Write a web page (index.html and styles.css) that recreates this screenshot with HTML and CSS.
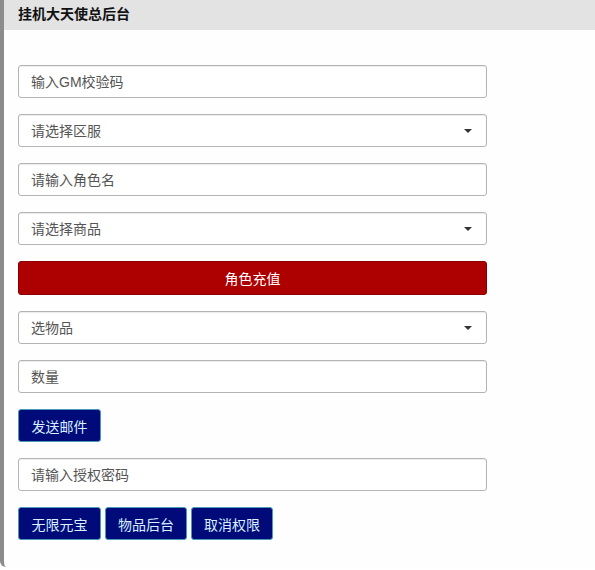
FILE: index.html
```html
<!DOCTYPE html>
<html lang="zh-CN">
<head>
  <meta charset="UTF-8" />
  <meta name="viewport" content="width=device-width, initial-scale=1.0" />
  <title>挂机大天使总后台</title>
  <link rel="stylesheet" href="styles.css">
</head>
<body>
  <div class="panel">
    <header class="panel-header">挂机大天使总后台</header>
    <form class="panel-form" onsubmit="return false">
      <input class="field" type="text" placeholder="输入GM校验码">
      <div class="select-wrap">
        <select class="field">
          <option>请选择区服</option>
        </select>
        <span class="caret"></span>
      </div>
      <input class="field" type="text" placeholder="请输入角色名">
      <div class="select-wrap">
        <select class="field">
          <option>请选择商品</option>
        </select>
        <span class="caret"></span>
      </div>
      <button class="btn btn-danger btn-block" type="button">角色充值</button>
      <div class="select-wrap">
        <select class="field">
          <option>选物品</option>
        </select>
        <span class="caret"></span>
      </div>
      <input class="field" type="text" placeholder="数量">
      <div class="btn-row">
        <button class="btn btn-navy" type="button">发送邮件</button>
      </div>
      <input class="field" type="password" placeholder="请输入授权密码">
      <div class="btn-row">
        <button class="btn btn-navy" type="button">无限元宝</button>
        <button class="btn btn-navy" type="button">物品后台</button>
        <button class="btn btn-navy" type="button">取消权限</button>
      </div>
    </form>
  </div>
</body>
</html>
```

FILE: styles.css
```css
:root {
  --font-main: "Liberation Sans", "Noto Sans CJK SC", sans-serif;
  --border-field: #b4b4b4;
  --text-field: #555555;
  --header-bg: #e3e3e3;
  --danger: #ad0000;
  --navy: #000a78;
  --navy-border: #4a9ab5;
}
* {
  box-sizing: border-box;
}
body {
  margin: 0;
  background: #ffffff;
  font-family: var(--font-main);
  font-size: 14px;
  color: #222;
}
.panel {
  height: 567px;
  border-left: 4px solid #8c8c8c;
  border-bottom-left-radius: 6px;
  background: #fefefe;
}
.panel-header {
  height: 30px;
  padding: 3px 0 0 14px;
  background: var(--header-bg);
  font-weight: bold;
  font-size: 14px;
  color: #111;
}
.panel-form {
  width: 483px;
  padding: 35px 0 0 14px;
  display: flex;
  flex-direction: column;
  gap: 16px;
}
.field {
  display: block;
  width: 100%;
  height: 33px;
  margin: 0;
  padding: 0 12px;
  border: 1px solid var(--border-field);
  border-radius: 3px;
  box-shadow: inset 0 1px 1px rgba(0, 0, 0, 0.08);
  background: #fff;
  font-family: var(--font-main);
  font-size: 14px;
  color: var(--text-field);
  outline: none;
}
.field::placeholder {
  color: var(--text-field);
}
select.field {
  appearance: none;
  -webkit-appearance: none;
  cursor: pointer;
}
.select-wrap {
  position: relative;
}
.caret {
  position: absolute;
  right: 15px;
  top: 15px;
  border-left: 4px solid transparent;
  border-right: 4px solid transparent;
  border-top: 4px solid #333;
  pointer-events: none;
}
.btn {
  height: 34px;
  border-radius: 3px;
  font-family: var(--font-main);
  font-size: 14px;
  cursor: pointer;
}
.btn-block {
  width: 100%;
}
.btn-danger {
  background: var(--danger);
  border: 1px solid #8a0000;
  color: #fff;
}
.btn-row {
  display: flex;
  gap: 4px;
}
.btn-navy {
  width: 83px;
  height: 33px;
  padding: 0;
  background: var(--navy);
  border: 1px solid var(--navy-border);
  color: #d8f0ff;
}
.btn-navy + .btn-navy {
  width: 82px;
}
```
